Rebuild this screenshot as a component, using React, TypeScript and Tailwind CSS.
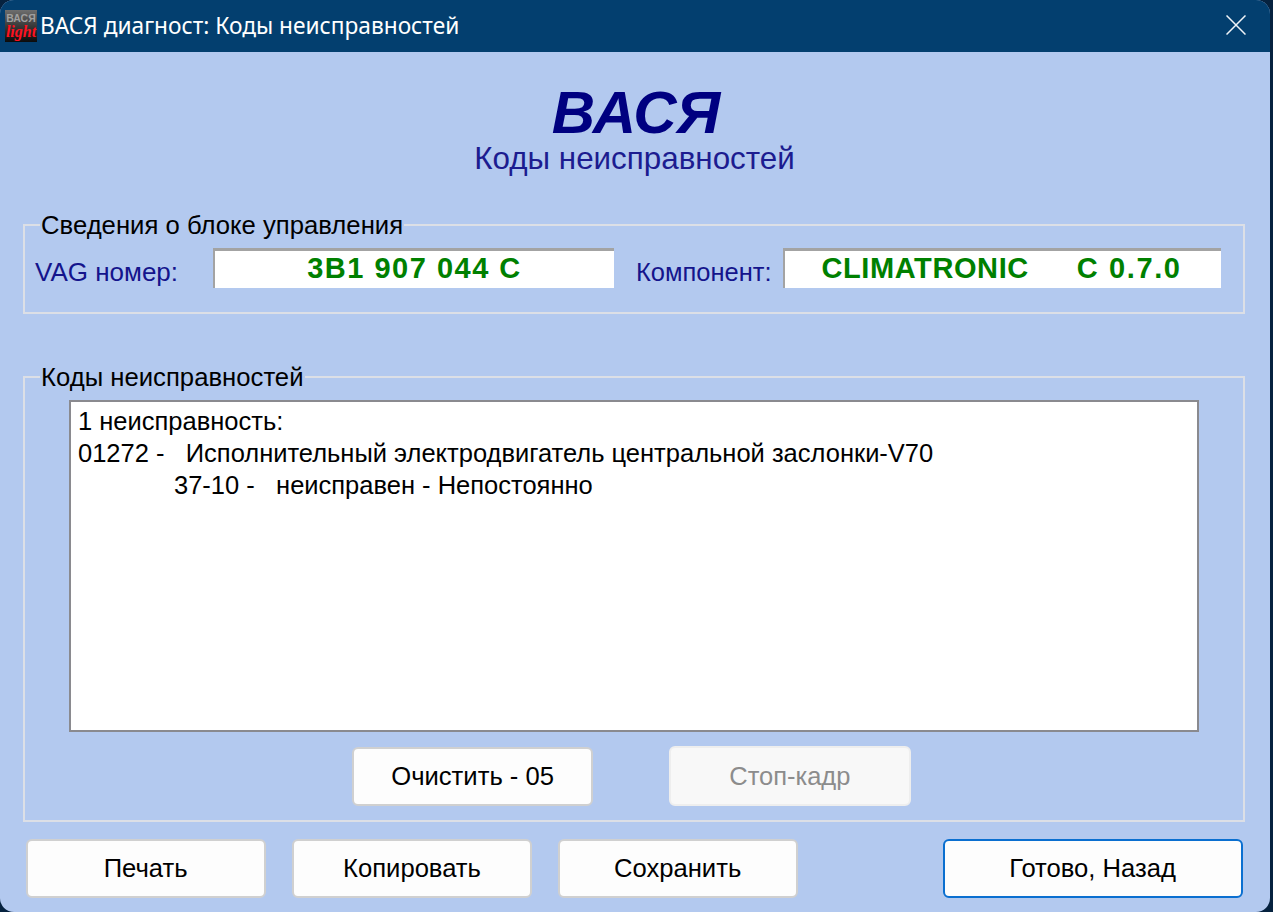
const sans = "font-['Liberation_Sans',Arial,sans-serif]";

function Btn({ label, w, cls = "" }: { label: string; w: string; cls?: string }) {
  return (
    <button className={`${w} h-[59px] rounded-[6px] bg-[#fdfdfd] border-2 border-[#d0d0d0] text-[26px] text-black flex items-center justify-center ${cls}`}>
      <span className="scale-x-[0.985] whitespace-pre">{label}</span>
    </button>
  );
}

function Field({ children, w, cls = "" }: { children: React.ReactNode; w: string; cls?: string }) {
  return (
    <div className={`${w} h-[40px] bg-white border-t-[3px] border-l-[2px] border-[#a3a3a3] flex items-center justify-center pb-[2px] text-[29px] font-bold text-[#008000] whitespace-pre ${cls}`}>
      {children}
    </div>
  );
}

export default function App() {
  return (
    <div className={`w-[1273px] h-[912px] bg-[#06223f] overflow-hidden ${sans}`}>
      <div className="w-[1270px] h-[912px] rounded-[14px] overflow-hidden bg-[#b3c9ef] flex flex-col">
        <div className="h-[52px] bg-[#033f6f] flex items-center pl-[5px] shrink-0">
          <div className="w-[32px] h-[32px] bg-gradient-to-b from-[#6e6e6e] to-[#0c0c0c] flex flex-col items-center justify-center overflow-hidden leading-none">
            <span className="text-[10.5px] font-bold text-[#a0a0a0] leading-[11px]">ВАСЯ</span>
            <span className="text-[16px] italic font-bold text-[#ff1020] leading-[15px] font-['Liberation_Serif',serif]">light</span>
          </div>
          <span className="ml-[3px] text-[22.7px] text-white font-['Noto_Sans','Open_Sans',sans-serif] leading-none">ВАСЯ диагност: Коды неисправностей</span>
          <svg className="ml-auto mr-[24px] mb-[2px]" width="20" height="20" viewBox="0 0 20 20" fill="none" stroke="#f0f4f8" strokeWidth="1.5">
            <path d="M0.5 0.5 L19.5 19.5 M19.5 0.5 L0.5 19.5" />
          </svg>
        </div>

        <div className="flex-1 flex flex-col px-[23px]">
          <div className="flex flex-col items-center pt-[30px] h-[159px] text-center pr-[1px]">
            <div className="text-[60px] leading-[62px] font-bold italic text-[#000080] pl-[3px]">ВАСЯ</div>
            <div className="text-[32px] leading-[28px] text-[#1c1c90] scale-x-[0.98]">Коды неисправностей</div>
          </div>

          <fieldset className="w-[1222px] h-[103px] border-2 border-[#dcdfe6] pl-[10px] flex">
            <legend className="ml-[5px] px-[1px] text-[25.7px] leading-[28px] text-black">Сведения о блоке управления</legend>
            <div className="flex items-center mt-[9px] h-[40px]">
              <span className="w-[178px] pt-[8px] text-[26px] text-[#14148c] whitespace-pre">VAG номер:</span>
              <Field w="w-[401px]"><span className="tracking-[1.5px]">3B1 907 044 C</span></Field>
              <span className="ml-[22px] w-[147px] pt-[8px] text-[26px] text-[#14148c] scale-x-[0.98] origin-left whitespace-pre">Компонент:</span>
              <Field w="w-[438px]" cls="pr-[3px]">
                <span className="tracking-[0.6px]">CLIMATRONIC</span>
                <span className="ml-[48px] tracking-[1.6px]">C 0.7.0</span>
              </Field>
            </div>
          </fieldset>

          <fieldset className="mt-[49px] w-[1222px] h-[459px] border-2 border-[#dcdfe6] flex flex-col items-center">
            <legend className="ml-[15px] px-[1px] text-[25.7px] leading-[28px] text-black">Коды неисправностей</legend>
            <div className="w-[1130px] h-[332px] mt-[9px] bg-white border-2 border-[#8a8a8f] pl-[7px] pt-[3px] text-[25.5px] leading-[32px] text-black whitespace-pre">
              <div>1 неисправность:</div>
              <div>01272 -   Исполнительный электродвигатель центральной заслонки-V70</div>
              <div className="pl-[96px]">37-10 -   неисправен - Непостоянно</div>
            </div>
            <div className="flex gap-[76px] mt-[14px] mr-[5px] items-center">
              <Btn label="Очистить - 05" w="w-[241px]" />
              <button className="w-[242px] h-[60px] rounded-[6px] bg-[#f8f8f8] border-2 border-[#eeeeee] text-[26px] text-[#8c8c8c] flex items-center justify-center">
                <span className="scale-x-[0.98]">Стоп-кадр</span>
              </button>
            </div>
          </fieldset>

          <div className="flex mt-[17px] pl-[3px] items-start">
            <Btn label="Печать" w="w-[240px]" />
            <Btn label="Копировать" w="w-[240px]" cls="ml-[26px]" />
            <Btn label="Сохранить" w="w-[240px]" cls="ml-[26px]" />
            <Btn label="Готово, Назад" w="w-[300px]" cls="ml-[145px] !border-[#0a6fd0]" />
          </div>
        </div>
      </div>
    </div>
  );
}
